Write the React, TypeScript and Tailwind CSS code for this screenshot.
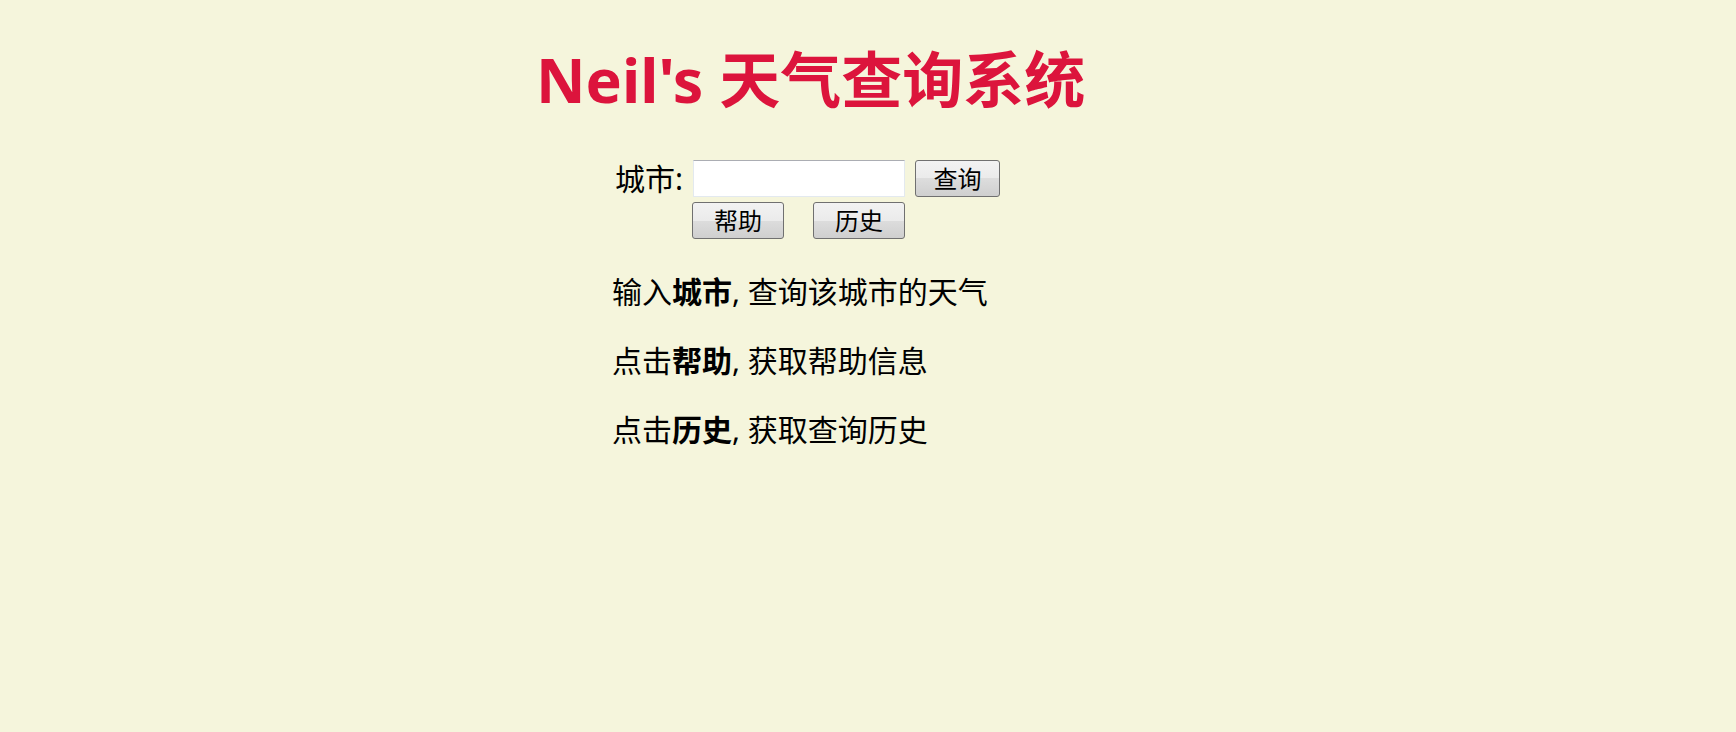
import React from "react";

const font = { fontFamily: '"Noto Sans", "Noto Sans CJK SC", sans-serif' };

const btn =
  "h-[37px] rounded-[3px] border border-[#707070] bg-[linear-gradient(#f2f2f2_0%,#ebebeb_50%,#dddddd_50%,#cfcfcf_100%)] text-[24px] leading-none text-black";

const tips: { pre: string; key: string; post: string }[] = [
  { pre: "输入", key: "城市", post: ", 查询该城市的天气" },
  { pre: "点击", key: "帮助", post: ", 获取帮助信息" },
  { pre: "点击", key: "历史", post: ", 获取查询历史" },
];

const App: React.FC = () => {
  return (
    <div className="min-h-[732px] w-full bg-[#f5f5dc]" style={font}>
      {/* Heading */}
      <div className="pl-[536px] pt-[44px]">
        <h1 className="text-[61px] font-bold leading-[72px] text-[#dc143c] whitespace-nowrap">
          Neil's 天气查询系统
        </h1>
      </div>

      {/* Search form */}
      <div className="pl-[615px] pt-[44px]">
        <div className="flex items-center">
          <label className="w-[78px] text-[30px] leading-none text-black">城市:</label>
          <input
            type="text"
            className="h-[37px] w-[212px] border border-[#e3e9ef] border-t-[#abadb3] bg-white px-1 text-[22px] outline-none"
          />
          <button className={`${btn} ml-[10px] w-[85px]`}>查询</button>
        </div>
        <div className="mt-[5px] flex items-center pl-[77px]">
          <button className={`${btn} w-[92px]`}>帮助</button>
          <button className={`${btn} ml-[29px] w-[92px]`}>历史</button>
        </div>

        {/* Help text */}
        <div className="pt-[32px] -ml-[3px]">
          {tips.map((t) => (
            <p key={t.key} className="mb-[27px] text-[30px] leading-[42px] text-black">
              {t.pre}
              <b>{t.key}</b>
              {t.post}
            </p>
          ))}
        </div>
      </div>
    </div>
  );
};

export default App;
